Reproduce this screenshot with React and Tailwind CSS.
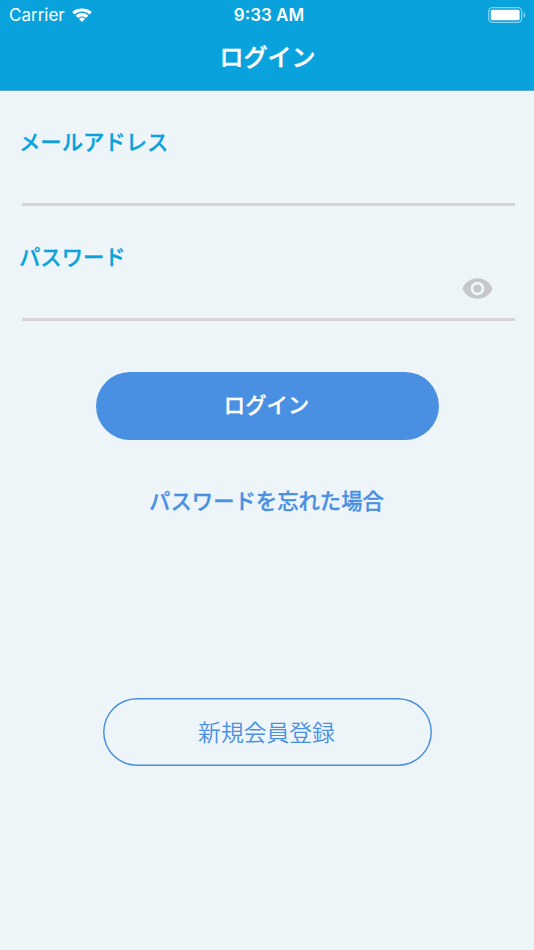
import React, { useState } from 'react';

const WifiIcon = () => (
    <svg width="20" height="15" viewBox="0 0 20 14" fill="white">
        <path d="M10 3.100c2.700 0 5.200 1 7.100 2.700.2.200.4.200.6 0l1.800-1.800c.2-.2.200-.5 0-.7C16.800 1 13.600 0 10 0S3.200 1 .5 3.300c-.2.200-.2.500 0 .7l1.800 1.800c.2.200.4.200.6 0C4.800 4.100 7.300 3.100 10 3.100z" />
        <path d="M10 7.900c1.300 0 2.600.5 3.600 1.300.2.200.4.200.6 0l1.800-1.800c.2-.2.200-.5 0-.7-3.400-3-8.600-3-12 0-.2.200-.2.500 0 .7l1.800 1.800c.2.200.4.200.6 0 1-.8 2.300-1.300 3.600-1.300z" />
        <path d="M12.700 10.800c.2-.2.200-.5 0-.7a4.300 4.300 0 0 0-5.400 0c-.2.200-.2.500 0 .7l2.400 2.400c.2.200.4.200.6 0z" />
    </svg>
);

const BatteryIcon = () => (
    <svg width="38" height="16" viewBox="0 0 38 16">
        <rect x="0.700" y="0.700" width="33" height="14.600" rx="3.800" fill="none" stroke="white" strokeOpacity="0.500" strokeWidth="1.300" />
        <rect x="2.800" y="2.700" width="28.800" height="10.600" rx="1.500" fill="white" />
        <path d="M35.600 5.200v5.600c1.200-.5 1.900-1.600 1.900-2.800s-.7-2.300-1.900-2.800z" fill="white" fillOpacity="0.500" />
    </svg>
);

const EyeIcon = () => (
    <svg width="33" height="33" viewBox="0 0 24 24" fill="#c6c6cb">
        <path d="M12 4.500C7 4.500 2.730 7.610 1 12c1.730 4.390 6 7.500 11 7.500s9.270-3.110 11-7.500c-1.730-4.390-6-7.500-11-7.500zM12 17c-2.760 0-5-2.240-5-5s2.240-5 5-5 5 2.240 5 5-2.240 5-5 5zm0-8c-1.660 0-3 1.340-3 3s1.340 3 3 3 3-1.340 3-3-1.340-3-3-3z" />
    </svg>
);

const App = () => {
    const [showPassword, setShowPassword] = useState(false);

    return (
        <div className="h-[950px] w-full overflow-hidden bg-[#edf5f9] font-['Inter','Noto_Sans_CJK_JP',sans-serif]">
            <header className="h-[91px] border-b border-[#5cabd6] bg-[#0aa2dd] text-white">
                <div className="grid h-[30px] grid-cols-3 items-center pr-2 pl-[9px] text-[17px]">
                    <div className="flex items-center gap-[7px]">
                        <span className="pt-0.5">Carrier</span>
                        <WifiIcon />
                    </div>
                    <span className="pt-0.5 pl-[3px] text-center font-semibold">9:33 AM</span>
                    <div className="flex justify-end">
                        <BatteryIcon />
                    </div>
                </div>
                <h1 className="mt-2.5 pl-px text-center text-2xl leading-9 font-medium [-webkit-text-stroke:0.4px]">ログイン</h1>
            </header>

            <form className="flex flex-col items-center" onSubmit={(e) => e.preventDefault()}>
                <label className="mt-[35px] block w-full pr-[19px] pl-[22px] text-[21.350px] leading-8 font-medium text-[#0aa2dd]">
                    <span className="-ml-[3px] block [-webkit-text-stroke:0.3px]">メールアドレス</span>
                    <input type="email" className="block h-12 w-full border-b-3 border-[#d7d3db] outline-none" />
                </label>
                <label className="mt-[35px] block w-full pr-[19px] pl-[22px] text-[21.350px] leading-8 font-medium text-[#0aa2dd]">
                    <span className="-ml-[3px] block [-webkit-text-stroke:0.3px]">パスワード</span>
                    <span className="flex h-12 items-start border-b-3 border-[#d7d3db] pr-[21px]">
                        <input type={showPassword ? 'text' : 'password'} className="min-w-0 flex-1 outline-none" />
                        <button type="button" className="-mt-px" onClick={() => setShowPassword(!showPassword)}>
                            <EyeIcon />
                        </button>
                    </span>
                </label>

                <button type="submit" className="mt-[51px] h-[68px] w-[343px] rounded-full bg-[#4a90e2] pr-px pb-0.5 text-[21.350px] font-medium text-white [-webkit-text-stroke:0.3px]">
                    ログイン
                </button>
                <button type="button" className="mt-[45px] pr-px text-[21.350px] leading-8 font-medium text-[#4a90e2] [-webkit-text-stroke:0.3px]">
                    パスワードを忘れた場合
                </button>
                <button type="button" className="mt-[181px] h-[68px] w-[329px] rounded-full pt-0.5 pr-px text-[22.800px] font-[350] text-[#4a90e2] shadow-[inset_0_0_0_1.500px_#4a90e2]">
                    新規会員登録
                </button>
            </form>
        </div>
    );
};

export default App;
